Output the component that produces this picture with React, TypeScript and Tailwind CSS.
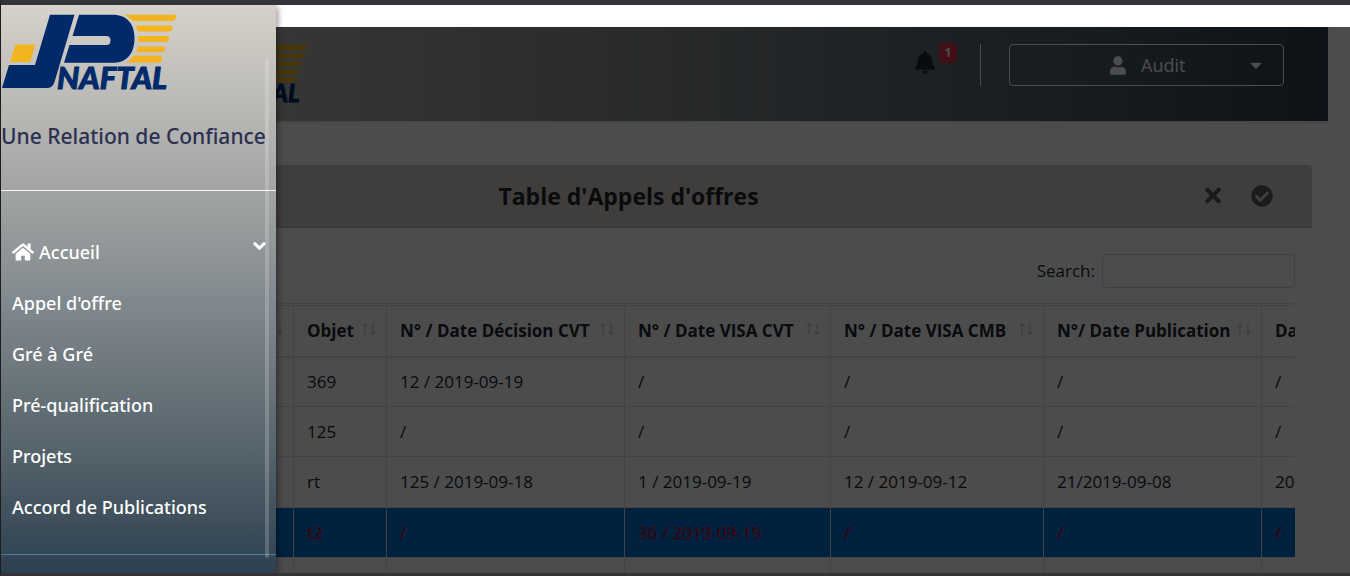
import React from "react";
import { FaAngleDown, FaBell, FaCaretDown, FaCheckCircle, FaHome, FaTimes, FaUser } from "react-icons/fa";

const columns = [
  { title: "", width: "w-[260px]" },
  { title: "Objet", width: "w-[93px]" },
  { title: "N° / Date Décision CVT", width: "w-[238px]" },
  { title: "N° / Date VISA CVT", width: "w-[206px]" },
  { title: "N° / Date VISA CMB", width: "w-[213px]" },
  { title: "N°/ Date Publication", width: "w-[218px]" },
  { title: "Da", width: "w-[240px]" },
];

const rows = [
  { cells: ["", "369", "12 / 2019-09-19", "/", "/", "/", "/"], selected: false },
  { cells: ["", "125", "/", "/", "/", "/", "/"], selected: false },
  { cells: ["", "rt", "125 / 2019-09-18", "1 / 2019-09-19", "12 / 2019-09-12", "21/2019-09-08", "20"], selected: false },
  { cells: ["", "t2", "/", "36 / 2019-09-19", "/", "/", "/"], selected: true },
  { cells: ["", "", "", "", "", "", ""], selected: false },
];

const menu = ["Appel d'offre", "Gré à Gré", "Pré-qualification", "Projets", "Accord de Publications"];

function Logo({ className }: { className: string }) {
  return (
    <svg viewBox="1 12 178 88" className={className} role="img" aria-label="NAFTAL">
      <g fill="#f2b41f">
        <path d="M15.5 44.5H35.5L30 62H10Z" />
        <path d="M124 14.7H174.5Q176.3 14.7 176 16.5L175.5 19Q175 21 173 21H133Q129.5 17 124 14.7Z" />
        <path d="M135.5 25.5H171Q173 25.5 172.5 27.5L172 29.5Q171.5 31.5 169.5 31.5H138Z" />
        <path d="M138 36H167.5Q169.5 36 169 38L168.5 40Q168 42 166 42H138.5Z" />
        <path d="M138 46.5H163.5Q165.5 46.5 165 48.5L164.5 50.5Q164 52.2 162 52.2H136Z" />
        <path d="M133.5 55.8H160.5Q162.3 55.8 162 57.8V60.5Q161.5 62.5 159.5 62.5H126.5Q130.5 60 133.5 55.8Z" />
      </g>
      <g fill="#002a6a">
        <path d="M50 14.7H74.5L54.5 82Q52.5 88 47 88H2L9 65H35Z" />
        <path d="M79 14.7H113C127 14.7 134.5 24 134.5 38C134.5 53 127 62.7 114 62.7H64L69.5 45H106.5Q110.5 45 110.5 40.5Q110.5 36 106.5 36H72.5Z" />
        <text
          x="57"
          y="89"
          fontSize="31"
          fontWeight="900"
          fontStyle="italic"
          fontFamily="Lato, 'Liberation Sans', sans-serif"
          stroke="#002a6a"
          strokeWidth="1"
        >
          NAFTAL
        </text>
      </g>
    </svg>
  );
}

function SortArrows() {
  return (
    <svg viewBox="0 0 16 14" className="mb-1 h-[14px] w-4 shrink-0 opacity-30" fill="none" stroke="#212529" strokeWidth="1" aria-hidden="true">
      <path d="M4 13V2M1.5 4.5L4 1.5L6.5 4.5" />
      <path d="M12 1V12M9.5 9.5L12 12.5L14.5 9.5" />
    </svg>
  );
}

function Header() {
  return (
    <header className="mr-[22px] flex h-[94px] items-start bg-[linear-gradient(to_right,#d6d1ca,#a1a4a3_33%,#7b8389_56%,#56646b_78%,#2e4050)] pt-4 pr-11 pl-[170px] shadow-sm">
      <Logo className="h-[68px] w-[138px]" />
      <div className="ml-auto flex items-start">
        <button type="button" aria-label="Notifications" className="flex items-start gap-1">
          <FaBell className="mt-2 h-[23px] w-5 text-[#212529]" />
          <span className="flex h-5 w-[18px] items-center justify-center rounded bg-[#dc3545] text-[13px] font-bold text-white">1</span>
        </button>
        <div className="mt-px ml-[23px] h-[42px] w-px bg-white" />
        <button type="button" className="mt-px ml-7 flex h-[42px] w-[275px] items-center rounded border border-white pr-5 pl-[100px] text-lg text-white">
          <FaUser className="h-[19px] w-4" />
          <span className="ml-[15px]">Audit</span>
          <FaCaretDown className="ml-auto h-[18px] w-[14px]" />
        </button>
      </div>
    </header>
  );
}

function TenderCard() {
  return (
    <section className="mt-11 mr-[38px] ml-4">
      <div className="flex h-[63px] items-center rounded-t border-b border-[#bfbab2] bg-[#d6d0c9] pr-[39px] pl-9">
        <h1 className="flex-1 text-center text-[23px] font-bold">Table d'Appels d'offres</h1>
        <div className="flex items-center gap-[29px] pb-px text-[#5c5c5c]">
          <button type="button" aria-label="Rejeter">
            <FaTimes className="h-[23px] w-[18px]" />
          </button>
          <button type="button" aria-label="Valider">
            <FaCheckCircle className="size-[22px]" />
          </button>
        </div>
      </div>
      <div className="pt-[26px] pr-[17px] pl-4">
        <div className="flex items-center justify-end gap-[7px]">
          <label htmlFor="search">Search:</label>
          <input id="search" type="search" className="h-[34px] w-[193px] rounded border border-[#ced4da] bg-white px-2" />
        </div>
        <div className="mt-[15px] overflow-hidden border-t border-[#dee2e6] pt-px">
          <table className="w-[1468px] table-fixed border-collapse">
            <colgroup>
              {columns.map((c, i) => (
                <col key={i} className={c.width} />
              ))}
            </colgroup>
            <thead>
              <tr className="h-[51px]">
                {columns.map((c, i) => (
                  <th key={i} className="border border-b-2 border-[#dee2e6] pr-[9px] pl-[13px] text-left font-bold whitespace-nowrap">
                    <div className="flex items-center justify-between">
                      <span>{c.title}</span>
                      <SortArrows />
                    </div>
                  </th>
                ))}
              </tr>
            </thead>
            <tbody className="[&>tr]:h-[50px] [&>tr:nth-child(3)]:h-[51px]">
              {rows.map((r, i) => (
                <tr key={i} className={r.selected ? "bg-[#006ecf] text-[#dc0014]" : ""}>
                  {r.cells.map((cell, j) => (
                    <td key={j} className="border border-[#dee2e6] px-[13px] whitespace-nowrap">
                      {cell}
                    </td>
                  ))}
                </tr>
              ))}
            </tbody>
          </table>
        </div>
      </div>
    </section>
  );
}

function Drawer() {
  return (
    <aside className="absolute inset-y-0 left-0 w-[275px] bg-[linear-gradient(to_bottom,#d6d1ca,#a1a4a3_33%,#7b8389_56%,#56646b_78%,#2e4050)] font-['Noto_Sans','Open_Sans',sans-serif] shadow-[2px_2px_6px_rgba(0,0,0,0.4)]">
      <div className="flex h-full flex-col">
        <div className="flex h-[186px] flex-col border-b border-white/90 pt-[7px]">
          <Logo className="h-22 w-[178px]" />
          <p className="mt-5 text-[21px] leading-8 font-medium whitespace-nowrap text-[#2b2f52]">Une Relation de Confiance</p>
        </div>
        <nav className="flex flex-1 flex-col pt-[35px] text-lg font-medium text-white">
          <a href="#accueil" className="flex h-[51px] items-center pr-[10px] pl-[11px]">
            <FaHome className="h-[22px] w-[22px]" />
            <span className="ml-[5px]">Accueil</span>
            <FaAngleDown className="mb-3 ml-auto h-5 w-[13px]" />
          </a>
          {menu.map((item) => (
            <a key={item} href="#menu" className="flex h-[51px] items-center pl-[11px]">
              {item}
            </a>
          ))}
          <div className="mt-[22px] border-t border-[#4a7d99]" />
        </nav>
      </div>
      <div className="absolute top-[54px] right-[7px] bottom-[15px] w-1 rounded bg-white/20" />
    </aside>
  );
}

export default function App() {
  return (
    <div className="flex h-screen flex-col overflow-hidden border-t-[5px] border-b-[3px] border-l border-t-[#343539] border-b-[#343338] border-l-[#1d1d20] bg-white font-['Open_Sans','Noto_Sans',sans-serif] text-[17px] text-[#212529]">
      <div className="relative flex-1 overflow-hidden">
        <main className="pt-[22px]">
          <Header />
          <TenderCard />
        </main>
        <div className="absolute inset-x-0 top-[22px] bottom-0 bg-black/70" />
        <Drawer />
      </div>
    </div>
  );
}
